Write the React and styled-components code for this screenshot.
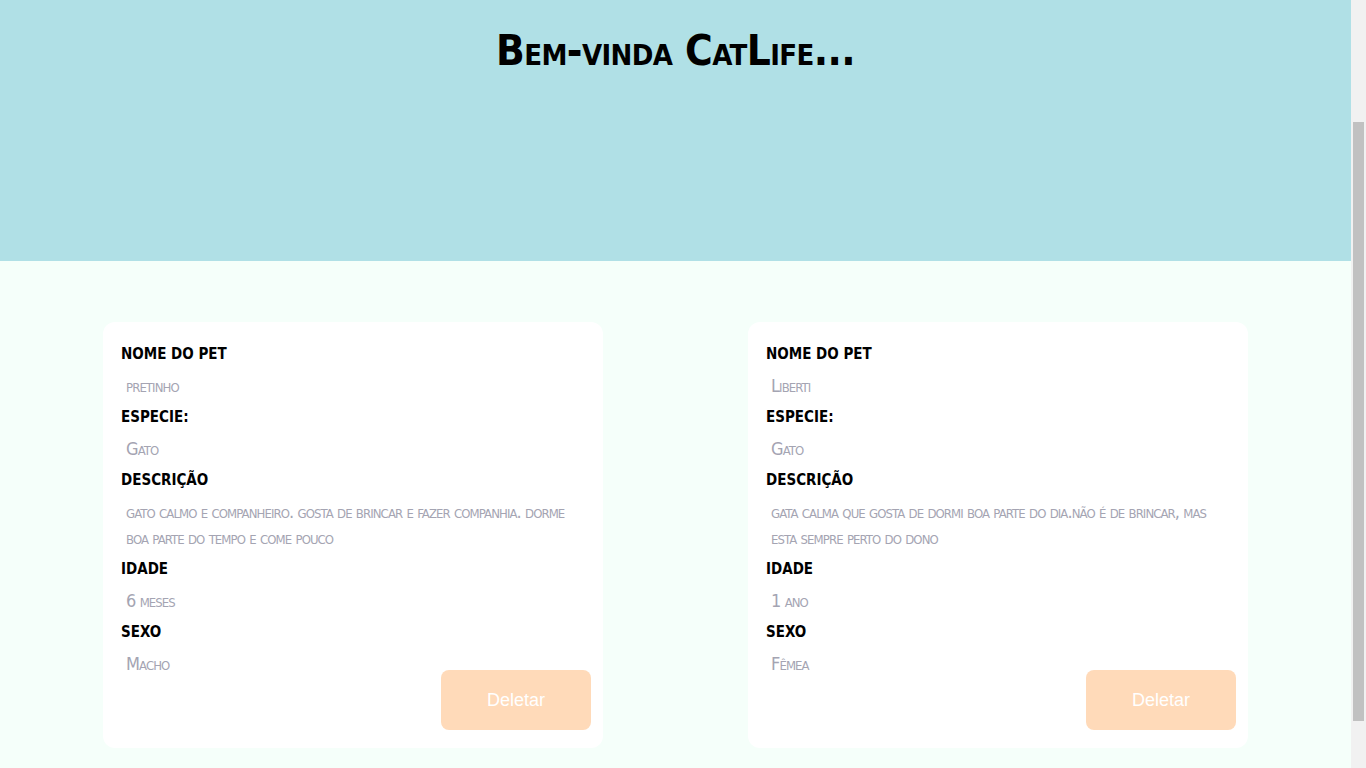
import React, { useLayoutEffect } from "react";
import styled, { createGlobalStyle } from "styled-components";

const GlobalStyle = createGlobalStyle`
  html {
    margin: 0;
    padding: 0;
    background:
      linear-gradient(#c1c1c1, #c1c1c1) no-repeat right 2px top 122px / 11px 599px fixed,
      #f1f1f1;
  }
  body {
    margin: 0 15px 0 0;
    padding: 0;
    background: #f5fffa;
  }
  * { box-sizing: border-box; }
`;

const handFont = `"DejaVu Sans Condensed", "Liberation Sans Narrow", "DejaVu Sans", sans-serif`;

const Header = styled.header`
  height: 398px;
  padding-top: 156px;
  background: #b0e0e6;
`;

const Title = styled.h1`
  margin: 0;
  text-align: center;
  font-family: ${handFont};
  font-stretch: condensed;
  font-variant: small-caps;
  font-weight: 700;
  font-size: 42px;
  letter-spacing: -0.6px;
  line-height: 64px;
  color: #000;
`;

const Main = styled.main`
  padding: 61px 0;
  display: flex;
  justify-content: center;
  gap: 145px;
`;

const Card = styled.article`
  width: 500px;
  background: #fff;
  border-radius: 12px;
  padding: 14px 12px 18px 18px;
  display: flex;
  flex-direction: column;
`;

const Label = styled.h3`
  margin: 0;
  font-family: ${handFont};
  font-stretch: condensed;
  font-weight: 700;
  font-size: 15px;
  line-height: 37px;
  text-transform: uppercase;
  color: #000;
`;

const Value = styled.p`
  margin: 0;
  padding-left: 5px;
  padding-right: 8px;
  font-family: ${handFont};
  font-stretch: condensed;
  font-variant: small-caps;
  font-size: 18px;
  letter-spacing: -0.9px;
  line-height: 26px;
  color: #a4a4b2;
`;

const DeleteButton = styled.button`
  align-self: flex-end;
  margin-top: -7px;
  width: 150px;
  height: 60px;
  border: none;
  border-radius: 8px;
  background: #ffdab9;
  color: #fff;
  font-family: "Liberation Sans", Arial, sans-serif;
  font-size: 18px;
  cursor: pointer;
`;

const pets = [
  {
    nome: "pretinho",
    especie: "Gato",
    descricao:
      "gato calmo e companheiro. gosta de brincar e fazer companhia. dorme boa parte do tempo e come pouco",
    idade: "6 meses",
    sexo: "Macho",
  },
  {
    nome: "Liberti",
    especie: "Gato",
    descricao:
      "gata calma que gosta de dormi boa parte do dia.não é de brincar, mas esta sempre perto do dono",
    idade: "1 ano",
    sexo: "Fêmea",
  },
];

function PetCard({ pet }) {
  return (
    <Card>
      <Label>Nome do pet</Label>
      <Value>{pet.nome}</Value>
      <Label>Especie:</Label>
      <Value>{pet.especie}</Value>
      <Label>Descrição</Label>
      <Value>{pet.descricao}</Value>
      <Label>Idade</Label>
      <Value>{pet.idade}</Value>
      <Label>Sexo</Label>
      <Value>{pet.sexo}</Value>
      <DeleteButton type="button">Deletar</DeleteButton>
    </Card>
  );
}

export default function App() {
  useLayoutEffect(() => {
    window.scrollTo(0, 137);
  }, []);
  return (
    <>
      <GlobalStyle />
      <Header>
        <Title>Bem-vinda CatLife...</Title>
      </Header>
      <Main>
        {pets.map((p) => (
          <PetCard key={p.nome} pet={p} />
        ))}
      </Main>
    </>
  );
}
